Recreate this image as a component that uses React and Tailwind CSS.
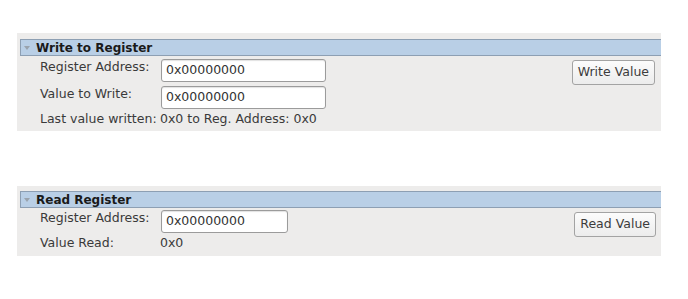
import React from "react";

const font = { fontFamily: '"DejaVu Sans", Verdana, sans-serif' };

const Header = ({ title }) => (
  <div className="ml-[3px] h-[17px] flex items-center bg-[#b9cfe6] border-y border-l border-[#8d9fb3]">
    <svg width="6" height="4" viewBox="0 0 6 4" className="ml-[3px] mr-[6px]">
      <path d="M0 0 L6 0 L3 4 Z" fill="#9aa3ad" />
    </svg>
    <span className="text-[12px] font-bold text-[#1a1a1a] leading-none">{title}</span>
  </div>
);

const Field = ({ width }) => (
  <div
    className={`h-[23px] ${width} bg-white border border-[#9b9b9b] rounded-[3px] shadow-[inset_0_1px_1px_rgba(0,0,0,0.12)] flex items-center pl-[4px] text-[12.5px] text-[#333]`}
  >
    0x00000000
  </div>
);

const Button = ({ label }) => (
  <button className="h-[25px] px-[5px] bg-gradient-to-b from-[#fcfcfc] to-[#ececec] border border-[#a3a3a3] rounded-[3px] text-[12.5px] text-[#3c3c3c]">
    {label}
  </button>
);

const Label = ({ children }) => (
  <div className="w-[121px] text-[12.5px] leading-[15px] text-[#3a3a3a]">{children}</div>
);

export default function App() {
  return (
    <div className="min-h-screen bg-white pt-[33px]" style={font}>
      {/* Write to Register */}
      <div className="ml-[17px] w-[644px] bg-[#edeceb] pt-[6px] pb-[2px]">
        <Header title="Write to Register" />
        <div className="flex justify-between pl-[23px] pr-[6px] pt-[3px]">
          <div className="flex flex-col">
            <div className="flex flex-col gap-[4px]">
              <div className="flex items-start">
                <Label>Register Address:</Label>
                <Field width="w-[165px]" />
              </div>
              <div className="flex items-start">
                <Label>Value to Write:</Label>
                <Field width="w-[165px]" />
              </div>
            </div>
            <div className="h-[20px] flex items-center text-[12.5px] text-[#3a3a3a]">
              <span className="w-[120px]">Last value written:</span>
              <span>0x0 to Reg. Address: 0x0</span>
            </div>
          </div>
          <div>
            <Button label="Write Value" />
          </div>
        </div>
      </div>

      {/* Read Register */}
      <div className="mt-[55px] ml-[17px] w-[644px] bg-[#edeceb] pt-[5px] pb-[3px]">
        <Header title="Read Register" />
        <div className="flex justify-between pl-[23px] pr-[5px] pt-[2px]">
          <div className="flex flex-col">
            <div className="flex items-start">
              <Label>Register Address:</Label>
              <Field width="w-[127px]" />
            </div>
            <div className="h-[20px] flex items-center text-[12.5px] text-[#3a3a3a]">
              <span className="w-[120px]">Value Read:</span>
              <span>0x0</span>
            </div>
          </div>
          <div className="pt-[1px]">
            <Button label="Read Value" />
          </div>
        </div>
      </div>
    </div>
  );
}
